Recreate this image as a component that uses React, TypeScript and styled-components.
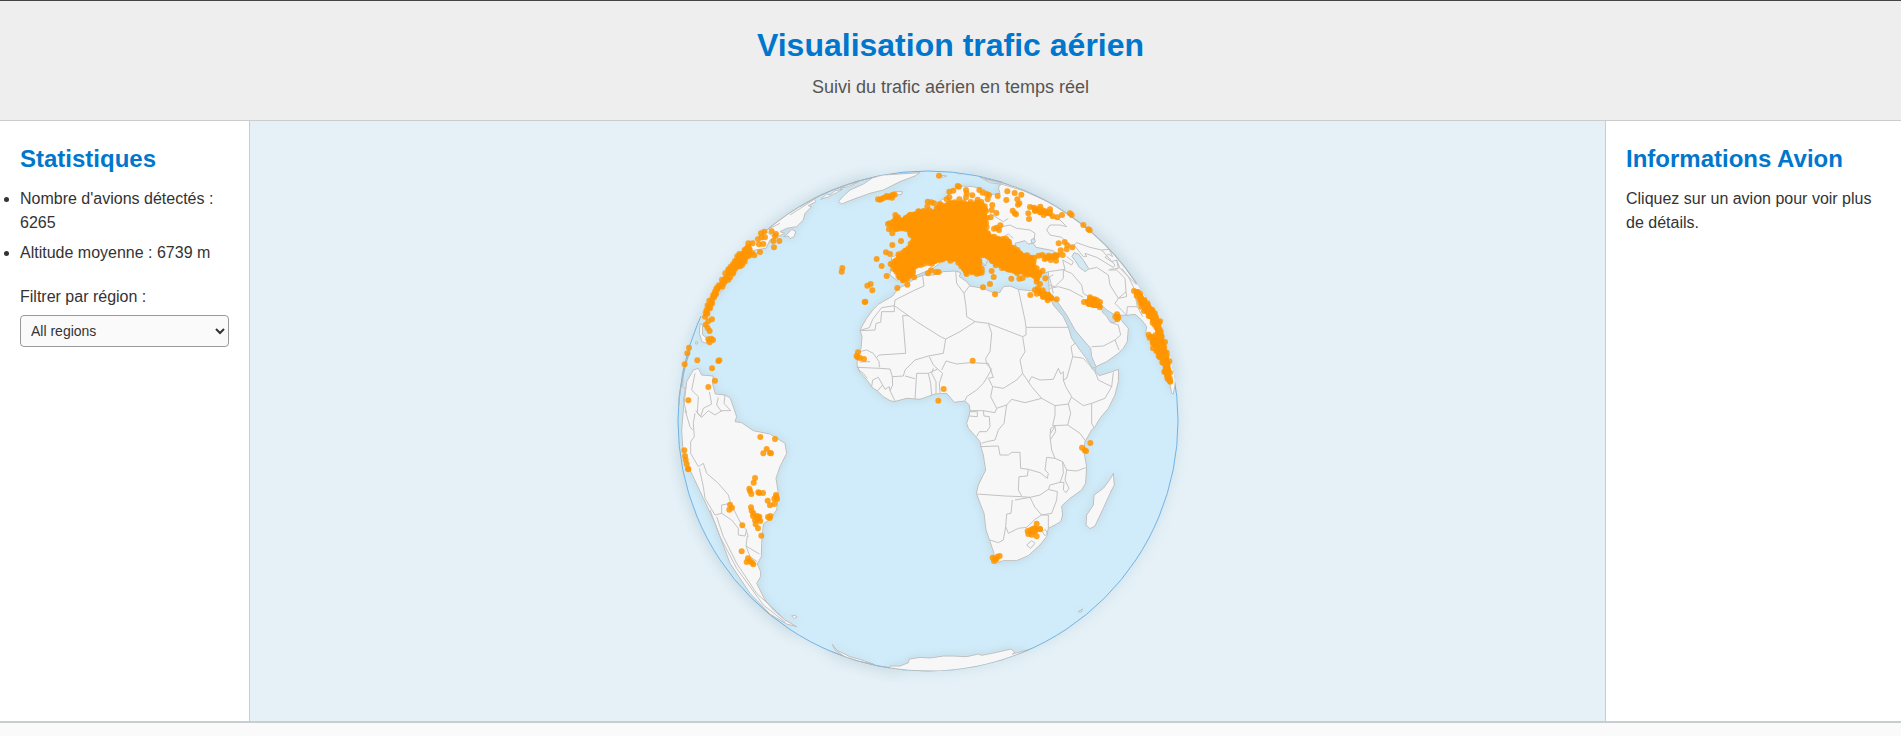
import React from "react";
import styled, { createGlobalStyle } from "styled-components";

const GlobalStyle = createGlobalStyle`
  * { box-sizing: border-box; }
  body {
    margin: 0;
    background: #fafafa;
    color: #333;
    font-family: Arial, "Liberation Sans", sans-serif;
    font-size: 16px;
    line-height: 24px;
  }
`;

const Header = styled.header`
  padding: 20px;
  background: #eee;
  border-top: 1px solid #444;
  border-bottom: 1px solid #ccc;
  text-align: center;
`;

const Title = styled.h1`
  margin: 0 0 6px;
  color: #07c;
  font-size: 32px;
  line-height: 48px;
`;

const Subtitle = styled.p`
  margin: 0;
  color: #555;
  font-size: 18px;
  line-height: 25px;
`;

const Layout = styled.div`
  display: grid;
  grid-template-columns: 250px minmax(0, 1fr) 296px;
`;

const Panel = styled.aside<{ $side: "left" | "right" }>`
  padding: 20px;
  background: #fff;
  border-${(p) => (p.$side === "left" ? "right" : "left")}: 1px solid #ccc;
`;

const PanelTitle = styled.h2`
  margin: 0 0 10px;
  color: #07c;
  font-size: 24px;
  line-height: 36px;
`;

const PanelText = styled.p`
  margin: 0;
`;

const StatList = styled.ul`
  margin: 0 0 20px;
  padding: 0;
`;

const Stat = styled.li`
  & + & { margin-top: 6px; }
`;

const FilterLabel = styled.label`
  display: block;
  margin-bottom: 6px;
`;

const FilterSelect = styled.select`
  display: block;
  width: 100%;
  height: 32px;
  padding: 0 6px;
  border: 1px solid #999;
  border-radius: 4px;
  background: #fafafa;
  color: #333;
  font-family: inherit;
  font-size: 14px;
`;

const MapArea = styled.main`
  display: flex;
  justify-content: center;
  background: #e5f1f7;
`;

const GlobeSvg = styled.svg`
  display: block;
  width: 100%;
  max-width: 600px;
  height: auto;
`;

const Footer = styled.footer`
  padding: 20px;
  background: #fafafa;
  border-top: 2px solid #c8cdce;
`;

type Point = [number, number];

/* Land masses, in globe units (three per pixel). */
const SOUTH_AMERICA =
  "M70 630 L85 625 95 645 130 648 127 668 136 702 165 705 180 713 190 740 200 770 195 785 215 788 250 812 300 822 345 850 350 880 330 920 318 955 325 1000 320 1050 300 1078 280 1092 275 1150 274 1190 262 1212 272 1235 272 1250 260 1270 270 1290 285 1320 310 1350 345 1380 380 1400 350 1392 300 1362 240 1300 180 1210 135 1090 100 1015 60 930 38 860 35 810 40 750 50 665Z";
const AFRICA =
  "M760 345 L735 355 712 372 685 385 668 408 625 433 608 450 590 475 578 495 570 510 576 530 573 565 562 590 561 615 570 637 582 650 592 662 606 682 622 693 640 710 660 722 673 725 710 715 750 718 795 702 830 700 853 727 885 723 898 735 900 752 897 768 890 790 895 805 915 827 930 845 934 865 940 885 943 905 947 930 925 975 919 1000 932 1035 942 1060 948 1110 960 1145 972 1180 968 1195 978 1210 1000 1202 1040 1202 1075 1187 1110 1155 1130 1130 1135 1105 1155 1095 1172 1085 1178 1065 1175 1038 1200 1015 1235 990 1247 970 1250 920 1242 875 1245 845 1265 810 1275 800 1290 775 1315 745 1335 705 1345 665 1346 628 1320 637 1288 647 1275 635 1265 625 1260 612 1245 590 1230 570 1205 535 1195 502 1180 470 1150 435 1138 405 1110 395 1080 392 1045 388 1020 378 1000 380 990 397 975 400 940 385 900 378 890 365 868 350 872 338 857 333 820 335 790 345Z";
const EURASIA =
  "M660 345 L665 290 735 275 745 245 720 220 770 180 850 130 800 130 830 110 855 85 880 78 910 80 945 90 955 105 990 100 985 84 1010 40 1500 100 1600 600 1524 600 1514 680 1510 702 1505 700 1500 675 1480 620 1450 560 1427 520 1430 500 1415 480 1395 463 1370 466 1335 465 1310 450 1290 430 1298 458 1308 466 1322 488 1336 486 1350 475 1355 482 1375 505 1372 545 1360 565 1345 580 1310 605 1278 620 1265 590 1262 565 1240 540 1215 510 1190 465 1155 415 1145 402 1150 422 1138 402 1135 335 1110 345 1060 335 1040 305 1000 320 960 290 925 285 945 335 900 335 865 300 820 300 790 325 730 350 680 360Z";
const NORTH_AMERICA =
  "M90 470 L180 100 430 115 438 125 415 137 425 140 405 160 400 180 380 200 350 205 330 215 345 220 300 240 288 265 255 270 210 320 160 385 125 430 105 470Z";
const GREENLAND =
  "M505 125 L520 108 540 90 580 72 610 52 640 45 750 38 735 48 690 65 640 90 600 100 550 118 515 132Z";
const ANTARCTICA =
  "M660 1518 L690 1518 715 1508 718 1497 750 1492 780 1494 820 1488 850 1488 890 1490 925 1482 935 1486 980 1477 1023 1467 1035 1478 1027 1482 1070 1470 1040 1580 640 1580Z";
const ANTARCTIC_PENINSULA = "M487 1453 L500 1470 540 1490 570 1498 610 1512 570 1505 530 1494 495 1470Z";
const ISLANDS =
  "M1330 940 L1333 975 1325 990 1300 1045 1275 1098 1260 1106 1248 1095 1250 1065 1270 1035 1272 1005 1300 985 1322 955Z M340 230 L352 222 365 208 378 215 372 230 360 236 355 228Z M670 95 L697 95 695 103 660 108Z M365 1368 L375 1366 381 1371 373 1376Z M1225 1355 L1238 1347 1234 1356Z M90 490 L97 495 98 525 112 535 110 550 96 545 88 520Z M77 545 h5 v7 h-5Z M452 118 L470 102 480 105 495 92 518 88 500 98 478 110Z M510 85 L540 70 565 66 535 80Z M810 45 L830 48 820 52Z M860 40 L872 42Z";

/* Inland seas painted over the continents. */
const SEAS =
  "M1035 250 L1065 242 1075 252 1090 250 1098 262 1150 272 1160 282 1120 282 1100 292 1070 285 1045 275Z M1212 278 L1225 282 1240 300 1256 326 1246 335 1228 322 1216 302 1206 290Z M932 282 L952 285 955 298 945 318 935 305Z M1083 240 L1093 234 1096 246 1086 250Z";

const BORDERS = [
  // North and west Africa
  "M758 348 L762 378 735 390 695 410 675 420 673 437 M673 455 V437 L635 443 M673 455 H635 L632 487 618 490 615 510 570 512 M635 443 L608 478 598 503 570 511",
  "M673 437 L740 485 815 532 827 537 820 580 775 588 735 600 705 630 700 648 667 650 660 627 630 625 560 622 M717 467 H698 L707 580 627 585 620 592 M827 537 L870 515 915 485 M568 575 L590 570 610 580 627 605 628 622 M570 606 L600 605",
  "M592 655 L580 640 563 628 M605 680 L608 660 625 652 638 675 622 693 M638 675 L645 688 658 680 660 692 675 723 M667 650 L668 675 660 692 M735 717 L740 640 775 640 782 670 785 705 M785 640 L798 665 798 702 M705 648 L735 656 M775 640 L803 627 818 640 808 670 810 700 M778 590 L790 615 803 627 M785 640 L790 625",
  "M815 630 L828 603 860 612 900 608 945 610 955 610 M915 485 L955 490 965 520 960 575 947 595 950 612 965 628 940 670 920 690 890 710 885 722 M857 333 L860 370 882 400 888 440 890 470 915 485 M882 400 L898 378 M955 490 L1058 530 M1045 388 L1065 480 1068 502 1195 502 M1068 502 V525 L1058 530 1065 575 1050 600 1058 640 1040 660 1000 685 970 680 M955 610 L970 652 955 655 968 680 962 710 980 745 975 758 940 752 900 752",
  // Central Africa
  "M900 755 H922 V770 L897 768 M940 752 L942 768 958 770 960 800 950 815 928 815 920 829 M980 745 L1010 735 1002 790 985 810 975 840 950 845 935 850 M1010 735 L1025 718 1065 728 1115 715 1085 680 1058 640 M1075 668 L1085 650 1110 660 1150 658 1165 625 1172 642 1180 635 1180 660 1187 680 1205 710 1195 732 1155 737 1115 715",
  "M1180 660 L1190 655 1200 620 1208 590 1203 560 1215 550 M1208 590 L1240 595 1265 622 M1265 625 L1278 622 1275 635 1285 660 1325 680 1330 637 M1325 680 L1305 715 1265 730 1240 737 1205 712 M1265 730 V790 L1273 805 M1195 732 L1202 760 1193 795 1230 820 1248 845 M1155 737 L1155 765 1148 797 1193 795 M1155 798 L1142 805 1140 830 1145 870 1155 895 M1142 820 L1155 800 1157 815 1142 838",
  // Southern Africa
  "M930 860 L985 858 990 885 1015 885 1025 877 1050 877 1052 925 1075 928 1110 938 1132 955 1135 940 1125 930 1130 892 1155 895 1178 905 1180 940 1170 967 1140 975 1135 988 M1075 928 L1072 948 1047 950 1045 990 1055 1008 M1178 905 L1190 930 1185 960 1197 985 1188 998 1180 990 1182 967 1170 967 M1190 930 L1220 933 1250 922",
  "M920 1002 L1005 1008 1055 1010 1080 1012 1035 1020 M1080 1012 L1110 1005 1135 988 1162 995 1160 1020 1145 1060 1115 1065 1095 1042Z M1027 1020 L1023 1060 1010 1062 1007 1100 1000 1140 985 1148 960 1140 M1007 1100 L1015 1120 1045 1105 1070 1102 1095 1078 1115 1065 1135 1065 V1105 M1117 1115 L1126 1108 1132 1120 1125 1127Z M1070 1155 L1085 1142 1095 1150 1082 1165Z",
  // Middle East
  "M1135 335 L1185 328 M1180 330 L1180 355 1155 380 1138 375 M1180 330 L1205 340 1235 375 1240 400 1290 432 M1140 385 L1165 380 1200 390 1240 412 M1265 560 L1300 558 1335 540 1347 570 M1335 540 L1352 525 1345 495 1325 488 M1185 328 L1178 300 1205 315 1210 305 1190 290 M1150 345 L1138 350 1150 400",
  // Central Asia and Russia
  "M1190 200 L1170 195 1140 195 1130 210 1140 225 1175 232 1205 262 M1190 200 L1170 180 1130 165 M1212 255 L1220 248 1260 262 1295 270 1335 315 1330 322 1280 292 1245 280 1250 292 M1212 255 L1240 290 1250 288 M1255 328 L1280 322 1315 345 1320 375 1345 415 1335 430 1370 466 M1315 330 L1340 330 1365 355 1368 395 1345 415 M1355 325 L1375 350 1390 380 1402 440 1418 470 M1295 270 L1318 268 1328 290 1315 282 1305 292 1325 305 1340 300 1345 325 1320 328 M1340 300 L1350 325 1400 375 M1318 268 L1340 290 M1345 415 L1370 410 1368 395 M1370 466 L1372 440 1402 440",
  "M975 205 L1020 195 1040 205 1080 210 1095 220 1092 240 M960 160 L1000 185 1015 175 M1030 235 L1015 222 1000 230 M930 52 L960 68 1000 74 1060 92 1180 145 M945 58 L1010 72 M1260 200 L1310 245 1370 320 M1290 230 L1350 300 1400 370",
  // South America
  "M75 640 L65 690 85 710 82 760 92 770 100 745 125 732 118 695 M145 712 L140 735 155 755 M165 705 L162 730 182 752 M77 752 L95 772 115 752 135 765 155 752 182 752 M75 760 L70 790 73 830 62 845 62 880 85 920 100 910 110 940 145 970 175 1005 182 1030 155 1035 155 1060 185 1080 205 1105 205 1125 225 1128 230 1110 215 1095 182 1030",
  "M88 925 L100 980 105 1015 135 1065 155 1060 M45 750 L60 800 68 810 M140 1070 L160 1130 200 1210 260 1300 320 1355 350 1385 M120 1050 L150 1130 200 1225 280 1335 345 1386 M232 1128 L228 1158 268 1182 M228 1158 L240 1190 262 1205 M48 680 L40 720 50 760 M235 1130 L228 1110 M40 640 L38 680 48 690",
  // Eastern coast of North America
  "M300 205 L330 190 M290 215 L310 230 M360 165 L430 120 M390 140 L470 95 580 60",
];

/* Dense traffic: each outline is filled and edged with scattered planes. */
const SWARMS: Point[][] = [
  [[664, 192], [678, 168], [695, 178], [725, 162], [768, 152], [785, 158], [805, 158], [800, 142], [825, 138], [840, 125], [860, 128], [890, 130], [915, 130], [925, 122], [942, 135], [948, 170], [945, 205], [950, 228], [1003, 238], [1025, 262], [1062, 288], [1088, 295], [1092, 325], [1105, 335], [1104, 358], [1080, 345], [1050, 338], [1015, 332], [990, 315], [965, 305], [950, 288], [925, 282], [928, 315], [936, 338], [922, 342], [902, 330], [888, 343], [878, 325], [860, 300], [820, 296], [790, 308], [765, 306], [735, 320], [722, 345], [697, 365], [688, 345], [676, 332], [664, 315], [690, 285], [712, 272], [732, 245], [720, 208], [695, 205], [675, 208]],
  [[240, 255], [205, 288], [170, 342], [138, 393], [114, 440], [108, 462], [122, 430], [152, 378], [183, 340], [228, 300], [242, 275]],
  [[1397, 390], [1425, 425], [1450, 450], [1466, 485], [1478, 540], [1490, 580], [1498, 625], [1497, 668], [1488, 650], [1482, 612], [1462, 580], [1446, 545], [1440, 525], [1452, 528], [1466, 535], [1458, 500], [1442, 472], [1422, 450], [1408, 420]],
  [[1100, 390], [1125, 398], [1145, 412], [1130, 418], [1108, 402]],
  [[1122, 288], [1150, 288], [1165, 282], [1150, 295], [1125, 297]],
  [[1247, 422], [1268, 415], [1282, 425], [1294, 440], [1272, 440], [1252, 432]],
  [[1085, 140], [1100, 150], [1130, 155], [1143, 165], [1115, 158], [1092, 150]],
  [[254, 1070], [270, 1070], [270, 1078], [260, 1082]],
  [[1078, 1118], [1098, 1102], [1106, 1106], [1086, 1122]],
];

const PLANES: Point[] = [
  [807, 47], [863, 78], [850, 92], [838, 95], [867, 80], [888, 90], [890, 100], [907, 106], [928, 90], [938, 98], [950, 102], [957, 105], [953, 118], [967, 135], [965, 150], [979, 159], [962, 172], [888, 112], [868, 118], [838, 112], [830, 118], [773, 125], [784, 127], [792, 130], [810, 132], [772, 140], [983, 108], [1009, 120], [1012, 94], [1034, 99], [1054, 104], [1042, 118], [1048, 130], [1044, 134], [1028, 152], [1034, 160], [1038, 163], [1075, 160], [1077, 177], [1111, 140], [1140, 148], [1162, 172], [1176, 165], [1200, 160], [1205, 165], [1240, 195], [1255, 208], [1259, 211], [991, 196], [980, 203], [987, 210], [972, 206], [1166, 250], [1184, 246], [1192, 256], [1207, 262], [1190, 268], [1172, 271], [1178, 285], [1106, 287], [1158, 302], [1024, 356], [1048, 356], [1058, 354], [1126, 355], [1100, 365], [1110, 372], [1118, 332], [1081, 405], [1160, 418], [1104, 385], [1290, 426], [1260, 412],
  [624, 118], [630, 119], [636, 116], [642, 113], [650, 108], [655, 112], [662, 108], [668, 104], [674, 104], [666, 113],
  [1341, 463], [1336, 470], [1345, 472], [1342, 478], [965, 333], [971, 351], [960, 372], [939, 382], [975, 403], [774, 340], [783, 331], [798, 336], [806, 336], [620, 297], [648, 277], [660, 282], [667, 255], [693, 243], [635, 318], [650, 348], [654, 192], [657, 208], [667, 220], [682, 384], [712, 374], [732, 352], [517, 324], [515, 335], [592, 377], [602, 372], [607, 391], [586, 425], [584, 426], [564, 577], [560, 588], [563, 592], [570, 594], [582, 597], [908, 602], [821, 687], [805, 722],
  [283, 215], [273, 220], [264, 238], [275, 232], [285, 232], [267, 253], [280, 252], [270, 276], [253, 286], [305, 214], [318, 222], [315, 228], [310, 243], [328, 243], [312, 262], [248, 250], [110, 455], [105, 470], [126, 478], [115, 484], [107, 494], [113, 504], [119, 513], [115, 538], [124, 536], [129, 540], [119, 547], [57, 563], [52, 580], [44, 613], [82, 601], [145, 603], [148, 601], [126, 625], [135, 662], [115, 681], [55, 721],
  [271, 831], [315, 837], [290, 867], [280, 880], [300, 879], [303, 880], [43, 871], [45, 888], [47, 899], [50, 912], [54, 926], [55, 928], [255, 954], [251, 968], [238, 986], [240, 993], [244, 1002], [265, 997], [268, 999], [279, 999], [293, 1022], [300, 1036], [313, 1032], [318, 1005], [313, 1016], [321, 1017], [319, 1010], [180, 1034], [186, 1043], [178, 1049], [243, 1042], [245, 1052], [250, 1060], [294, 1071], [301, 1068], [299, 1074], [257, 1093], [264, 1105], [274, 1127], [217, 1096], [215, 1174], [234, 1195], [230, 1206], [240, 1202], [246, 1208], [250, 1213], [1261, 849], [1236, 863], [1244, 871], [1248, 873], [1100, 1091], [1110, 1108], [1100, 1129], [1075, 1122],
  [968, 1193], [975, 1196], [982, 1190], [989, 1188], [972, 1203], [979, 1198],
];

const DOT_RADIUS = 9;

/* Repeatable pseudo-random numbers, so the map is the same on each render. */
function createRandom(seed: number) {
  let state = seed;
  return () => {
    state = (state * 16807) % 2147483647;
    return state / 2147483647;
  };
}

function scatterAlong(outline: Point[], seed: number): Point[] {
  const random = createRandom(seed);
  const result: Point[] = [];
  outline.forEach(([x1, y1], i) => {
    const [x2, y2] = outline[(i + 1) % outline.length];
    const count = Math.max(1, Math.round(Math.hypot(x2 - x1, y2 - y1) / 9));
    for (let n = 0; n < count; n++) {
      const t = n / count;
      result.push([
        Math.round(x1 + (x2 - x1) * t + (random() - 0.5) * 10),
        Math.round(y1 + (y2 - y1) * t + (random() - 0.5) * 10),
      ]);
    }
  });
  return result;
}

const Land = styled.path`
  fill: #f7f7f7;
  stroke: #bebebe;
  stroke-width: 3;
  stroke-linejoin: round;
`;

const Border = styled.path`
  fill: none;
  stroke: #c2c2c2;
  stroke-width: 3;
  stroke-linejoin: round;
`;

const Plane = styled.circle`
  fill: #ff9500;
  fill-opacity: 0.85;
`;

const Swarm = styled.polygon`
  fill: #ff9500;
  stroke: #ff9500;
  stroke-width: 8;
  stroke-linejoin: round;
`;

function Globe() {
  return (
    <GlobeSvg viewBox="-126 -117 1800 1800" role="img" aria-label="Globe du trafic aérien">
      <defs>
        <clipPath id="disc">
          <circle cx="774" cy="783" r="751" />
        </clipPath>
        <filter id="soft" x="-20%" y="-20%" width="140%" height="140%">
          <feGaussianBlur stdDeviation="20" />
        </filter>
        <filter id="landShadow" x="-10%" y="-10%" width="120%" height="120%">
          <feDropShadow dx="0" dy="0" stdDeviation="14" floodColor="#000" floodOpacity="0.08" />
        </filter>
      </defs>
      <circle cx="774" cy="783" r="750" fill="#7a9db3" opacity="0.22" filter="url(#soft)" />
      <path
        d="M60 620 A750 750 0 0 1 600 54 M880 40 A750 750 0 0 1 1515 660 M32 850 A750 750 0 0 0 380 1420 M480 1475 A750 750 0 0 0 700 1530"
        fill="none"
        stroke="#6f7f8a"
        strokeWidth="14"
        opacity="0.24"
        filter="url(#soft)"
      />
      <circle cx="774" cy="783" r="750" fill="#d0ebf9" stroke="#72b4e6" strokeWidth="3" />
      <g clipPath="url(#disc)">
        <g filter="url(#landShadow)">
          {[NORTH_AMERICA, GREENLAND, SOUTH_AMERICA, EURASIA, AFRICA, ANTARCTICA, ANTARCTIC_PENINSULA, ISLANDS].map((d) => (
            <Land key={d} d={d} />
          ))}
        </g>
        <path d={SEAS} fill="#d3e9f4" stroke="#bebebe" strokeWidth="3" />
        {BORDERS.map((d) => (
          <Border key={d} d={d} />
        ))}
        <path
          d="M264 233 A750 750 0 0 1 620 49 M930 50 A750 750 0 0 1 1400 370 M650 1523 A750 750 0 0 0 1078 1469 M480 1473 A750 750 0 0 0 650 1523 M25 740 A750 750 0 0 1 60 570"
          fill="none"
          stroke="#a9b4bb"
          strokeWidth="4"
        />
      </g>
      {SWARMS.map((outline, i) => (
        <g key={i}>
          <Swarm points={outline.join(" ")} />
          {scatterAlong(outline, 71 + i * 13).map(([x, y], n) => (
            <Plane key={n} cx={x} cy={y} r={DOT_RADIUS} />
          ))}
        </g>
      ))}
      {PLANES.map(([x, y], i) => (
        <Plane key={i} cx={x} cy={y} r={DOT_RADIUS} />
      ))}
    </GlobeSvg>
  );
}

export default function App() {
  return (
    <>
      <GlobalStyle />
      <Header>
        <Title>Visualisation trafic aérien</Title>
        <Subtitle>Suivi du trafic aérien en temps réel</Subtitle>
      </Header>
      <Layout>
        <Panel $side="left">
          <PanelTitle>Statistiques</PanelTitle>
          <StatList>
            <Stat>Nombre d'avions détectés : 6265</Stat>
            <Stat>Altitude moyenne : 6739 m</Stat>
          </StatList>
          <FilterLabel htmlFor="region">Filtrer par région :</FilterLabel>
          <FilterSelect id="region" defaultValue="all">
            <option value="all">All regions</option>
          </FilterSelect>
        </Panel>
        <MapArea>
          <Globe />
        </MapArea>
        <Panel $side="right">
          <PanelTitle>Informations Avion</PanelTitle>
          <PanelText>Cliquez sur un avion pour voir plus de détails.</PanelText>
        </Panel>
      </Layout>
      <Footer />
    </>
  );
}
